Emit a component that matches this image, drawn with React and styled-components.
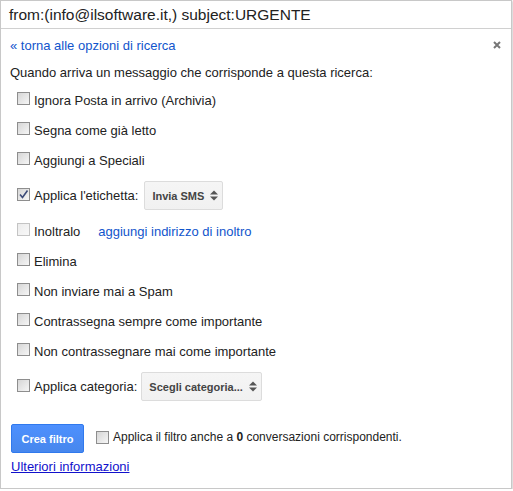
import React from "react";
import styled, { createGlobalStyle } from "styled-components";

const Global = createGlobalStyle`
  html, body { margin: 0; padding: 0; background: #fff; }
  body { font-family: "Liberation Sans", Arial, sans-serif; color: #222; }
`;

const Panel = styled.div`
  box-sizing: border-box;
  width: 512px;
  height: 489px;
  border: 1px solid #c8c8c8;
  box-shadow: 1px 1px 2px rgba(0, 0, 0, 0.2);
  display: flex;
  flex-direction: column;
  background: #fff;
`;

const SearchBar = styled.div`
  height: 27px;
  line-height: 27px;
  border-bottom: 1px solid #d0d0d0;
  padding-left: 8px;
  font-size: 15.5px;
  color: #222;
`;

const Body = styled.div`
  padding: 8px 10px 0 9px;
  display: flex;
  flex-direction: column;
`;

const TopRow = styled.div`
  display: flex;
  justify-content: space-between;
  align-items: center;
  height: 16px;
`;

const BackLink = styled.a`
  color: #15c;
  font-size: 13px;
  text-decoration: none;
  cursor: pointer;
`;

const Close = styled.svg`
  width: 8px;
  height: 8px;
  margin-top: -1px;
`;

const Intro = styled.div`
  font-size: 13px;
  margin-top: 12px;
  line-height: 16px;
`;

const Options = styled.div`
  display: flex;
  flex-direction: column;
  margin-top: 4px;
  padding-left: 7px;
`;

const Row = styled.div`
  display: flex;
  align-items: center;
  height: ${(p) => (p.$tall ? 41 : 30)}px;
  font-size: 13px;
`;

const Box = styled.span`
  box-sizing: border-box;
  width: 13px;
  height: 13px;
  flex: none;
  border: 1px solid ${(p) => (p.$disabled ? "#c4c4c4" : "#8e8e8e")};
  background: ${(p) =>
    p.$disabled
      ? "linear-gradient(135deg, #ececec, #f8f8f8)"
      : "linear-gradient(135deg, #d6d6d6, #f6f6f6)"};
  margin-right: 4px;
  margin-top: -3px;
  display: inline-flex;
  align-items: center;
  justify-content: center;
`;

const Label = styled.span`
  color: #222;
  white-space: nowrap;
`;

const InlineLink = styled.a`
  color: #15c;
  margin-left: 18px;
  cursor: pointer;
`;

const Select = styled.div`
  box-sizing: border-box;
  height: 29px;
  margin-left: ${(p) => p.$gap}px;
  padding: 0 4px 0 7px;
  display: inline-flex;
  align-items: center;
  gap: 6px;
  border: 1px solid #dcdcdc;
  border-radius: 2px;
  background: linear-gradient(#f5f5f5, #f1f1f1);
  font-size: 11px;
  font-weight: bold;
  color: #444;
  white-space: nowrap;
`;

const Arrows = styled.svg`
  width: 8px;
  height: 11px;
  flex: none;
`;

const Footer = styled.div`
  display: flex;
  align-items: center;
  margin-top: 17px;
  padding-left: 1px;
`;

const Button = styled.button`
  box-sizing: border-box;
  width: 73px;
  height: 29px;
  border: 1px solid #3079ed;
  border-radius: 2px;
  background: linear-gradient(#4d90fe, #4787ed);
  color: #fff;
  font-family: "Liberation Sans", Arial, sans-serif;
  font-weight: bold;
  font-size: 11px;
  padding: 0;
  margin-right: 12px;
`;

const ApplyText = styled.span`
  font-size: 12px;
  color: #222;
  margin-top: -4px;
`;

const More = styled.a`
  margin-top: 6px;
  font-size: 13px;
  color: #11c;
  text-decoration: underline;
  padding-left: 1px;
  align-self: flex-start;
`;

const Check = ({ checked, disabled }) => (
  <Box $disabled={disabled}>
    {checked && (
      <svg width="11" height="11" viewBox="0 0 11 11">
        <path d="M2 5.5 L4.5 8.5 L9.5 1.5" fill="none" stroke="#3b4a78" strokeWidth="1.6" />
      </svg>
    )}
  </Box>
);

const UpDown = () => (
  <Arrows viewBox="0 0 8 11">
    <path d="M0 4.5 L4 0.5 L8 4.5 Z" fill="#555" />
    <path d="M0 6.5 L4 10.5 L8 6.5 Z" fill="#555" />
  </Arrows>
);

const simple = [
  "Ignora Posta in arrivo (Archivia)",
  "Segna come già letto",
  "Aggiungi a Speciali",
];
const simple2 = [
  "Elimina",
  "Non inviare mai a Spam",
  "Contrassegna sempre come importante",
  "Non contrassegnare mai come importante",
];

export default function App() {
  return (
    <>
      <Global />
      <Panel>
        <SearchBar>from:(info@ilsoftware.it,) subject:URGENTE</SearchBar>
        <Body>
          <TopRow>
            <BackLink>« torna alle opzioni di ricerca</BackLink>
            <Close viewBox="0 0 8 8">
              <path d="M1 1 L7 7 M7 1 L1 7" stroke="#777" strokeWidth="2" />
            </Close>
          </TopRow>
          <Intro>Quando arriva un messaggio che corrisponde a questa ricerca:</Intro>
          <Options>
            {simple.map((t) => (
              <Row key={t}>
                <Check />
                <Label>{t}</Label>
              </Row>
            ))}
            <Row $tall>
              <Check checked />
              <Label>Applica l'etichetta:</Label>
              <Select $gap={6}>
                Invia SMS
                <UpDown />
              </Select>
            </Row>
            <Row>
              <Check disabled />
              <Label>Inoltralo</Label>
              <InlineLink>aggiungi indirizzo di inoltro</InlineLink>
            </Row>
            {simple2.map((t) => (
              <Row key={t}>
                <Check />
                <Label>{t}</Label>
              </Row>
            ))}
            <Row $tall>
              <Check />
              <Label>Applica categoria:</Label>
              <Select $gap={4}>
                Scegli categoria...
                <UpDown />
              </Select>
            </Row>
          </Options>
          <Footer>
            <Button>Crea filtro</Button>
            <Check />
            <ApplyText>
              Applica il filtro anche a <b>0</b> conversazioni corrispondenti.
            </ApplyText>
          </Footer>
          <More>Ulteriori informazioni</More>
        </Body>
      </Panel>
    </>
  );
}
